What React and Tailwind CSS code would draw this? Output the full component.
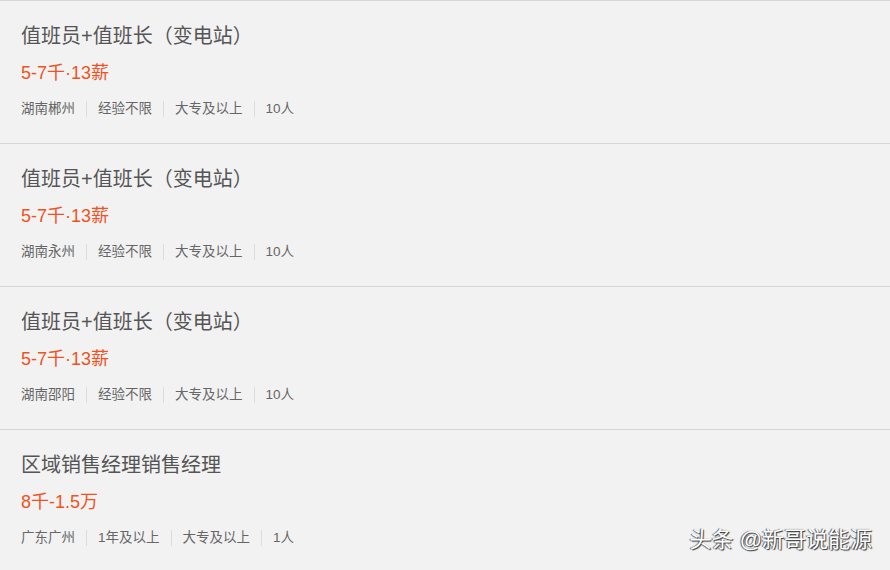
import React from "react";

const jobs = [
  { title: "值班员+值班长（变电站）", salary: "5-7千·13薪", tags: ["湖南郴州", "经验不限", "大专及以上", "10人"] },
  { title: "值班员+值班长（变电站）", salary: "5-7千·13薪", tags: ["湖南永州", "经验不限", "大专及以上", "10人"] },
  { title: "值班员+值班长（变电站）", salary: "5-7千·13薪", tags: ["湖南邵阳", "经验不限", "大专及以上", "10人"] },
  { title: "区域销售经理销售经理", salary: "8千-1.5万", tags: ["广东广州", "1年及以上", "大专及以上", "1人"] },
];

export default function App() {
  return (
    <div
      className="relative w-[890px] h-[570px] overflow-hidden bg-[#f2f2f2]"
      style={{ fontFamily: '"Liberation Sans", "Noto Sans CJK SC", sans-serif' }}
    >
      {jobs.map((j, i) => (
        <div key={i} className="h-[143px] border-t border-[#d3d6dd] pl-[21px] pt-[21px]">
          {/* 职位名 */}
          <div className="text-[20px] leading-[28px] text-[#555555]">{j.title}</div>
          {/* 薪资 */}
          <div className="mt-[10px] text-[18px] leading-[26px] text-[#f0531f]">{j.salary}</div>
          {/* 标签 */}
          <div className="mt-[13px] flex items-center text-[13.5px] leading-[20px] text-[#666666]">
            {j.tags.map((t, k) => (
              <React.Fragment key={k}>
                {k > 0 && <span className="mx-[11px] w-px h-[16px] bg-[#dcdcdc]" />}
                <span>{t}</span>
              </React.Fragment>
            ))}
          </div>
        </div>
      ))}

      {/* 水印 */}
      <div
        className="absolute right-[18px] bottom-[16px] text-[22px] leading-[28px] text-white"
        style={{ textShadow: "1px 1px 1px #333, -1px 0 1px #555" }}
      >
        头条 @新哥说能源
      </div>
    </div>
  );
}
